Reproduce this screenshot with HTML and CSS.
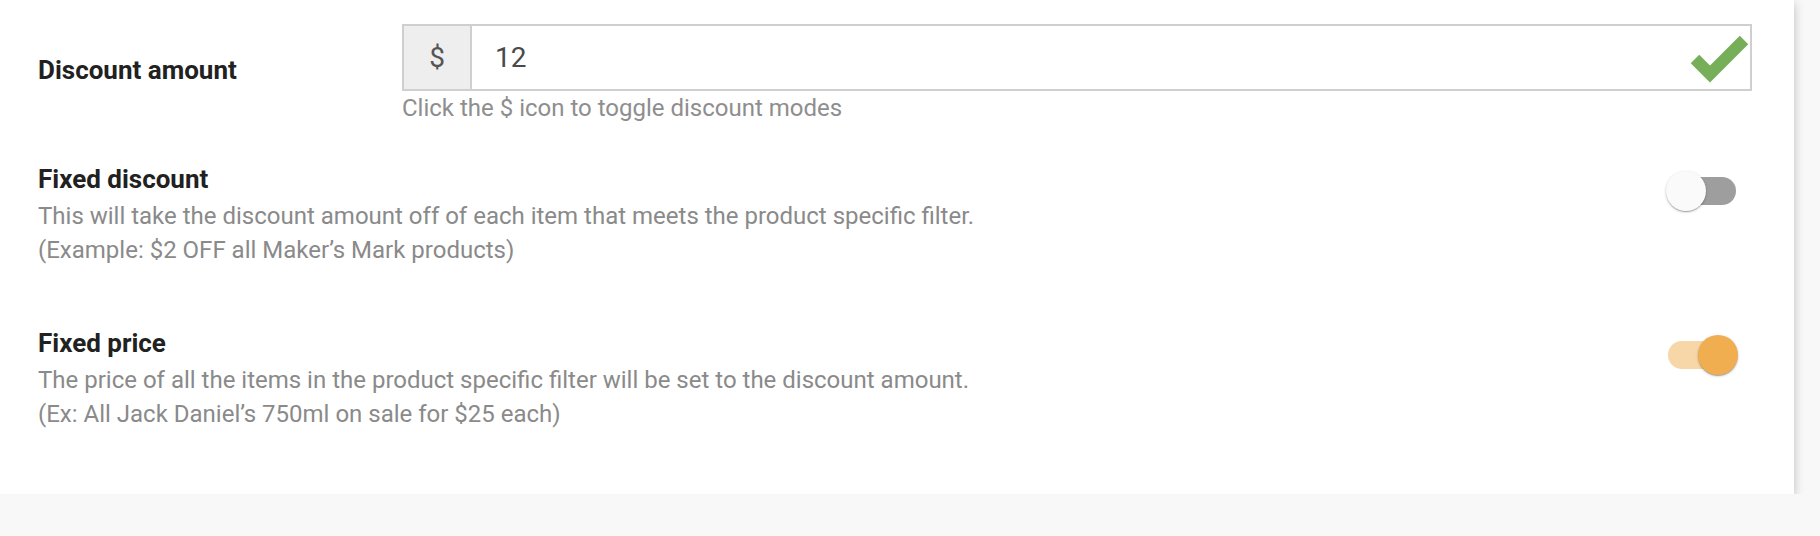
FILE: index.html
```html
<!DOCTYPE html>
<html>
<head>
<meta charset="utf-8">
<link rel="stylesheet" href="styles.css">
</head>
<body>
<div class="card">
  <div class="amount-row">
    <div class="amount-label">Discount amount</div>
    <div class="amount-field">
      <div class="input-group">
        <span class="addon">$</span>
        <div class="input-value">12</div>
        <svg class="check" viewBox="0 0 66 67" width="66" height="67">
          <polyline points="9,35 24,50 58,16" fill="none" stroke="#77ae59" stroke-width="12" stroke-linecap="butt" stroke-linejoin="miter"/>
        </svg>
      </div>
      <div class="help">Click the $ icon to toggle discount modes</div>
    </div>
  </div>

  <div class="option option-first">
    <div class="opt-text">
      <div class="opt-title">Fixed discount</div>
      <div class="opt-desc">This will take the discount amount off of each item that meets the product specific filter.<br>(Example: $2 OFF all Maker’s Mark products)</div>
    </div>
    <div class="switch switch-off"><span class="track"></span><span class="knob"></span></div>
  </div>

  <div class="option option-second">
    <div class="opt-text">
      <div class="opt-title">Fixed price</div>
      <div class="opt-desc">The price of all the items in the product specific filter will be set to the discount amount.<br>(Ex: All Jack Daniel’s 750ml on sale for $25 each)</div>
    </div>
    <div class="switch switch-on"><span class="track"></span><span class="knob"></span></div>
  </div>
</div>
</body>
</html>
```

FILE: styles.css
```css
html, body {
  margin: 0;
  padding: 0;
  background: #f8f8f8;
  font-family: Roboto, "Liberation Sans", Arial, sans-serif;
}

.card {
  width: 1794px;
  height: 494px;
  box-sizing: border-box;
  background: #ffffff;
  box-shadow: 0 3px 10px rgba(0, 0, 0, 0.24);
  padding: 24px 42px 0 38px;
}

.amount-row {
  display: flex;
  align-items: flex-start;
}

.amount-label {
  width: 364px;
  flex: none;
  padding-top: 30.5px;
  font-size: 26px;
  line-height: 30px;
  font-weight: 700;
  color: #212121;
}

.amount-field {
  flex: 1;
}

.input-group {
  position: relative;
  display: flex;
  height: 67px;
  box-sizing: border-box;
  border: 2px solid #cfcfcf;
}

.addon {
  width: 66px;
  flex: none;
  background: #eeeeee;
  border-right: 2px solid #cfcfcf;
  display: flex;
  align-items: center;
  justify-content: center;
  font-size: 28px;
  color: #555555;
}

.input-value {
  flex: 1;
  display: flex;
  align-items: center;
  padding-left: 23px;
  font-size: 28px;
  color: #4a4a4a;
}

.check {
  position: absolute;
  right: -2px;
  top: -2px;
}

.help {
  margin-top: 0.5px;
  font-size: 24px;
  line-height: 33px;
  color: #8e8e8e;
}

.option {
  display: flex;
  justify-content: space-between;
  align-items: flex-start;
  margin-right: 14px;
}

.option-first {
  margin-top: 39px;
}

.option-second {
  margin-top: 61px;
}

.opt-title {
  font-size: 26px;
  line-height: 30px;
  font-weight: 700;
  color: #212121;
}

.opt-desc {
  margin-top: 5px;
  font-size: 24px;
  line-height: 34px;
  color: #8a8a8a;
}

.switch {
  position: relative;
  width: 72px;
  height: 40px;
  flex: none;
  margin-top: 7.5px;
}

.track {
  display: block;
  margin: 6px 2px 0;
  height: 28px;
  border-radius: 14px;
  background: #9e9e9e;
}

.knob {
  position: absolute;
  top: 0;
  width: 40px;
  height: 40px;
  border-radius: 50%;
  box-shadow: 0 1px 3px rgba(0, 0, 0, 0.2), 0 1px 1px rgba(0, 0, 0, 0.14), 0 2px 1px -1px rgba(0, 0, 0, 0.12);
}

.switch-off .knob {
  left: 0;
  background: #fafafa;
}

.switch-on .track {
  background: #f7d7a7;
}

.switch-on .knob {
  right: 0;
  background: #f0ae50;
}
```
